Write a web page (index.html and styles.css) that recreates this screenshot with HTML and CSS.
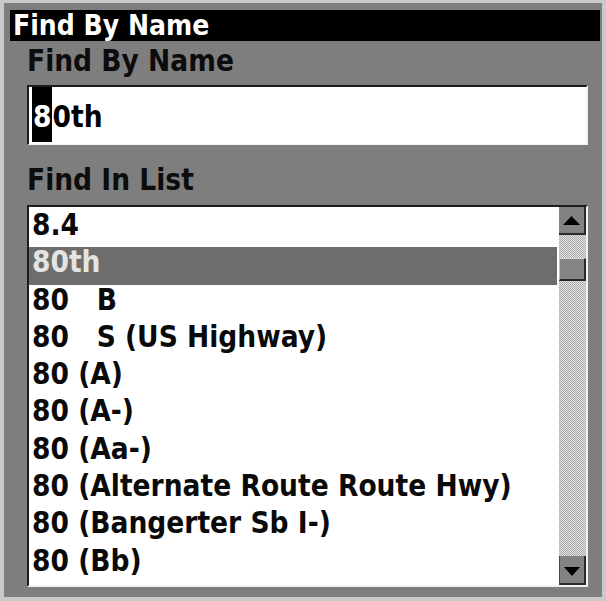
FILE: index.html
```html
<!DOCTYPE html>
<html>
<head>
<meta charset="utf-8">
<title>Find By Name</title>
<link rel="stylesheet" href="styles.css">
</head>
<body>
<div class="frame">
  <div class="titlebar">Find By Name</div>
  <div class="content">
    <div class="label label-name">Find By Name</div>
    <div class="input"><span class="cursor">8</span><span class="rest">0th</span></div>
    <div class="label label-list">Find In List</div>
    <div class="list">
      <div class="rows">
        <div class="row">8.4</div>
        <div class="row selected">80th</div>
        <div class="row">80   B</div>
        <div class="row">80   S (US Highway)</div>
        <div class="row">80 (A)</div>
        <div class="row">80 (A-)</div>
        <div class="row">80 (Aa-)</div>
        <div class="row">80 (Alternate Route Route Hwy)</div>
        <div class="row">80 (Bangerter Sb I-)</div>
        <div class="row">80 (Bb)</div>
      </div>
      <div class="scroll">
        <div class="btn up"><svg width="17" height="9" viewBox="0 0 17 9"><polygon points="8.5,0 17,9 0,9" fill="#000"/></svg></div>
        <div class="track"><div class="thumb"></div></div>
        <div class="btn down"><svg width="16" height="9" viewBox="0 0 16 9"><polygon points="0,0 16,0 8,9" fill="#000"/></svg></div>
      </div>
    </div>
  </div>
</div>
</body>
</html>
```

FILE: styles.css
```css
html, body {
  margin: 0;
  height: 601px;
  overflow: hidden;
}

body {
  background: #c9c9c9;
  font-family: "DejaVu Sans Condensed", "DejaVu Sans", sans-serif;
  font-stretch: condensed;
  font-weight: bold;
}

.frame {
  margin: 3px 4px 0 4px;
  height: 594px;
  padding-top: 7px;
  box-sizing: border-box;
  background: #7e7e7e;
  overflow: hidden;
}

.titlebar {
  margin: 0 2px 0 6px;
  height: 31px;
  line-height: 31px;
  padding-left: 3px;
  background: #000;
  color: #fff;
  font-size: 28px;
}

.content {
  padding: 0 14px 0 23px;
}

.label {
  font-size: 29.5px;
  line-height: 33px;
  color: #0c0c0c;
}

.label-name {
  margin-top: 4px;
}

.label-list {
  margin-top: 19px;
}

.input {
  margin-top: 7px;
  height: 60px;
  box-sizing: border-box;
  display: flex;
  align-items: flex-start;
  padding-left: 3px;
  background: #fff;
  border-top: 2px solid #1c1c1c;
  border-left: 2px solid #1c1c1c;
  border-right: 2px solid #f2f2f2;
  border-bottom: 1px solid #f2f2f2;
  font-size: 29.5px;
}

.cursor {
  background: #000;
  color: #fff;
  padding: 6px 1px 0;
  line-height: 49px;
}

.rest {
  padding-top: 6px;
  line-height: 49px;
  color: #000;
}

.list {
  margin-top: 8px;
  height: 382px;
  box-sizing: border-box;
  display: flex;
  gap: 2px;
  background: #fff;
  border-top: 2px solid #1c1c1c;
  border-left: 2px solid #1c1c1c;
  border-right: 2px solid #f2f2f2;
  border-bottom: 2px solid #f2f2f2;
}

.rows {
  flex: 1;
  padding-top: 3px;
  overflow: hidden;
}

.row {
  height: 37.3px;
  box-sizing: border-box;
  line-height: 31px;
  padding-left: 3px;
  white-space: pre;
  font-size: 29.5px;
  color: #0a0a0a;
}

.row.selected {
  background: #6d6d6d;
  color: #e4e4e4;
}

.scroll {
  width: 27px;
  display: flex;
  flex-direction: column;
}

.btn {
  box-sizing: border-box;
  background: #828282;
  display: flex;
  align-items: center;
  justify-content: center;
}

.btn svg {
  display: block;
}

.up {
  height: 28px;
  border-right: 2px solid #2a2a2a;
  border-bottom: 2px solid #2a2a2a;
}

.track {
  flex: 1;
  background: repeating-conic-gradient(#e4e4e4 0 25%, #a9a9a9 0 50%) 0 0 / 2px 2px;
}

.thumb {
  margin-top: 23px;
  height: 23px;
  box-sizing: border-box;
  background: #858585;
  border-top: 1px solid #d6d6d6;
  border-left: 1px solid #bdbdbd;
  border-right: 2px solid #2a2a2a;
  border-bottom: 2px solid #2a2a2a;
}

.down {
  height: 29px;
  padding-top: 3px;
  border-left: 1px solid #4a4a4a;
  border-right: 2px solid #2a2a2a;
  border-bottom: 2px solid #2a2a2a;
}
```
